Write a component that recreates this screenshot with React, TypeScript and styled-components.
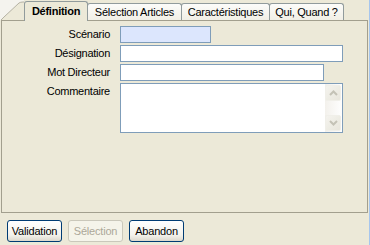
import styled, { createGlobalStyle } from "styled-components";

const GlobalStyle = createGlobalStyle`
  html, body {
    margin: 0;
    padding: 0;
  }
  body {
    background: #ece9d8;
    font-family: "Liberation Sans", Arial, sans-serif;
    font-size: 11px;
    color: #000;
  }
`;

const Window = styled.div`
  box-sizing: border-box;
  width: 370px;
  height: 245px;
  border-right: 1px solid #a6c6ee;
  background: #ece9d8;
  display: flex;
  flex-direction: column;
`;

const TabStrip = styled.div`
  display: flex;
  align-items: flex-end;
  height: 20px;
  position: relative;
  z-index: 1;
`;

const Corner = styled.svg`
  display: block;
  width: 24px;
  height: 20px;
  flex: none;
`;

const Tab = styled.div<{ $active?: boolean; $w: number }>`
  box-sizing: border-box;
  width: ${(p) => p.$w}px;
  height: ${(p) => (p.$active ? 20 : 17)}px;
  margin-left: -1px;
  margin-bottom: ${(p) => (p.$active ? -1 : 0)}px;
  padding-top: ${(p) => (p.$active ? 3 : 2)}px;
  border: 1px solid #919b9c;
  border-bottom: none;
  border-radius: 3px 3px 0 0;
  background: ${(p) =>
    p.$active ? "#ece9d8" : "linear-gradient(#fcfcfa, #f1efe6)"};
  font-weight: ${(p) => (p.$active ? "bold" : "normal")};
  letter-spacing: -0.25px;
  text-align: center;
  line-height: 13px;
  white-space: nowrap;
  position: relative;
  z-index: ${(p) => (p.$active ? 2 : 1)};
  &:first-of-type {
    margin-left: 0;
  }
`;

const Panel = styled.div`
  box-sizing: border-box;
  margin-left: 1px;
  width: 367px;
  height: 193px;
  border: 1px solid #a29f8e;
  padding-top: 5px;
`;

const Form = styled.div`
  display: grid;
  grid-template-columns: 108px 1fr;
  column-gap: 10px;
  row-gap: 2px;
  align-items: start;
`;

const Label = styled.div`
  text-align: right;
  line-height: 17px;
  white-space: nowrap;
  letter-spacing: -0.25px;
`;

const Field = styled.div<{ $w: number; $h?: number; $focus?: boolean }>`
  box-sizing: border-box;
  width: ${(p) => p.$w}px;
  height: ${(p) => p.$h ?? 17}px;
  border: 1px solid #7f9db9;
  background: ${(p) => (p.$focus ? "#dce6fd" : "#fff")};
  display: flex;
  justify-content: flex-end;
`;

const ScrollBar = styled.div`
  width: 17px;
  display: flex;
  flex-direction: column;
  justify-content: space-between;
  background: linear-gradient(to right, #f3f1ec, #fefefe);
  padding: 1px 0;
`;

const ArrowButton = styled.div`
  box-sizing: border-box;
  width: 16px;
  height: 16px;
  border: 1px solid #f0efe9;
  border-radius: 2px;
  background: linear-gradient(135deg, #f4f3ee, #e8e6dc);
  display: flex;
  align-items: center;
  justify-content: center;
`;

const Buttons = styled.div`
  display: flex;
  gap: 6px;
  padding: 7px 0 0 7px;
`;

const Button = styled.div<{ $disabled?: boolean }>`
  box-sizing: border-box;
  width: 55px;
  height: 22px;
  border: 1px solid ${(p) => (p.$disabled ? "#cac8bb" : "#003c74")};
  border-radius: 3px;
  background: ${(p) =>
    p.$disabled ? "#f5f4ea" : "linear-gradient(#ffffff, #f3f2ec 70%, #dcd8cc)"};
  color: ${(p) => (p.$disabled ? "#aca899" : "#000")};
  letter-spacing: -0.2px;
  display: flex;
  align-items: center;
  justify-content: center;
  white-space: nowrap;
`;

function Chevron({ up }: { up?: boolean }) {
  return (
    <svg width="9" height="6" viewBox="0 0 9 6">
      <path
        d={up ? "M1 5 L4.5 1.5 L8 5" : "M1 1 L4.5 4.5 L8 1"}
        fill="none"
        stroke="#c4c2b6"
        strokeWidth="2"
      />
    </svg>
  );
}

export default function App() {
  return (
    <>
      <GlobalStyle />
      <Window>
        <TabStrip>
          <Corner viewBox="0 0 24 20">
            <rect width="24" height="20" fill="#f4f3ee" />
            <path d="M1 20 L4 17 L19 3 Q20.5 2 23 2 L24 2 L24 20 Z" fill="#ece9d8" />
            <path d="M1 20 L4 17 L19 3 Q20.5 2 23 2 L24 2" fill="none" stroke="#b5b2a4" strokeWidth="1" />
          </Corner>
          <Tab $active $w={64}>Définition</Tab>
          <Tab $w={95}>Sélection Articles</Tab>
          <Tab $w={89}>Caractéristiques</Tab>
          <Tab $w={75}>Qui, Quand ?</Tab>
        </TabStrip>
        <Panel>
          <Form>
            <Label>Scénario</Label>
            <Field $w={91} $focus />
            <Label>Désignation</Label>
            <Field $w={223} />
            <Label>Mot Directeur</Label>
            <Field $w={204} />
            <Label>Commentaire</Label>
            <Field $w={223} $h={50}>
              <ScrollBar>
                <ArrowButton>
                  <Chevron up />
                </ArrowButton>
                <ArrowButton>
                  <Chevron />
                </ArrowButton>
              </ScrollBar>
            </Field>
          </Form>
        </Panel>
        <Buttons>
          <Button>Validation</Button>
          <Button $disabled>Sélection</Button>
          <Button>Abandon</Button>
        </Buttons>
      </Window>
    </>
  );
}
